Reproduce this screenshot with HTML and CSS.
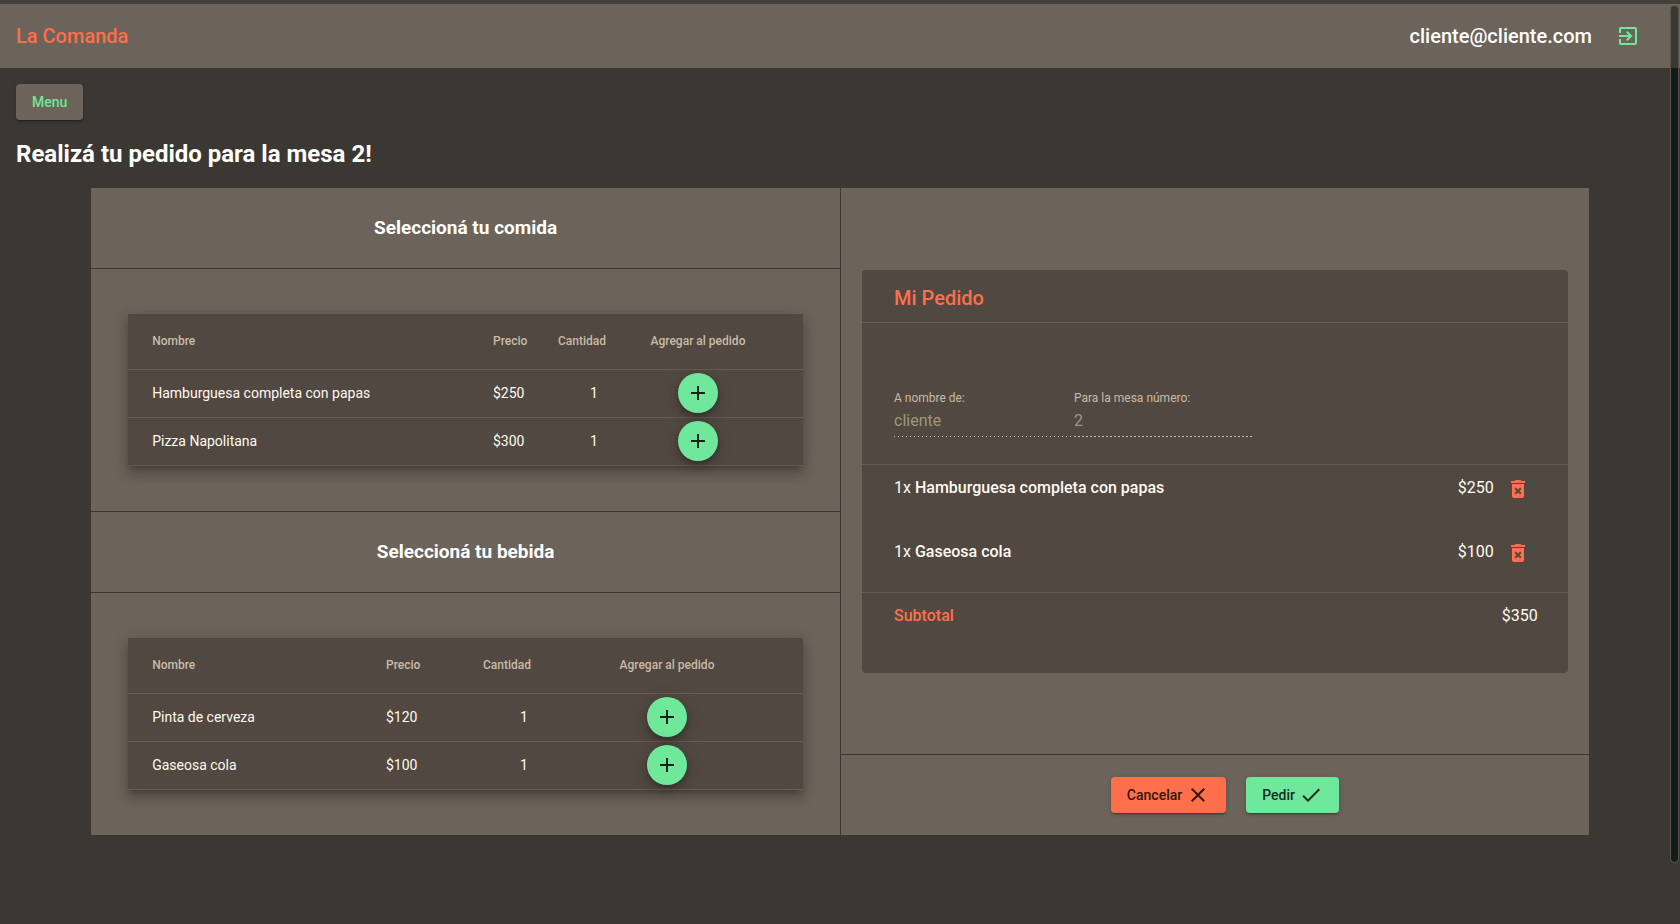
FILE: index.html
```html
<!DOCTYPE html>
<html lang="es">
<head>
<meta charset="utf-8">
<meta name="viewport" content="width=device-width, initial-scale=1">
<title>La Comanda</title>
<link rel="stylesheet" href="styles.css">
</head>
<body>
<svg class="sprite" aria-hidden="true">
  <symbol id="exit" viewBox="0 0 24 24"><path d="M10.09 15.59L11.5 17l5-5-5-5-1.41 1.41L12.67 11H3v2h9.67l-2.58 2.59zM19 3H5c-1.11 0-2 .9-2 2v4h2V5h14v14H5v-4H3v4c0 1.1.89 2 2 2h14c1.1 0 2-.9 2-2V5c0-1.1-.9-2-2-2z"/></symbol>
  <symbol id="add" viewBox="0 0 24 24"><path d="M19 13h-6v6h-2v-6H5v-2h6V5h2v6h6v2z"/></symbol>
  <symbol id="trash" viewBox="0 0 24 24"><path d="M6 19c0 1.1.9 2 2 2h8c1.1 0 2-.9 2-2V7H6v12zm2.46-7.12l1.41-1.41L12 12.59l2.12-2.12 1.41 1.41L13.41 14l2.12 2.12-1.41 1.41L12 15.41l-2.12 2.12-1.41-1.41L10.59 14l-2.13-2.12zM15.5 4l-1-1h-5l-1 1H5v2h14V4z"/></symbol>
  <symbol id="close" viewBox="0 0 24 24"><path d="M19 6.41L17.59 5 12 10.59 6.41 5 5 6.41 10.59 12 5 17.59 6.41 19 12 13.41 17.59 19 19 17.59 13.41 12z"/></symbol>
  <symbol id="done" viewBox="0 0 24 24"><path d="M9 16.2L4.8 12l-1.4 1.4L9 19 21 7l-1.4-1.4L9 16.2z"/></symbol>
</svg>

<header class="topbar">
  <a class="brand" href="#">La Comanda</a>
  <span class="user">cliente@cliente.com</span>
  <button class="icon-button logout" type="button" aria-label="Salir"><svg class="icon"><use href="#exit"/></svg></button>
</header>

<main class="page">
  <button class="button button-menu" type="button">Menu</button>
  <h1 class="page-title">Realizá tu pedido para la mesa 2!</h1>

  <div class="board">
    <div class="column column-products">
      <h2 class="section-title">Seleccioná tu comida</h2>
      <section class="section-body">
        <table class="products products-food">
          <colgroup><col><col class="col-price"><col class="col-amount"><col class="col-add"></colgroup>
          <thead>
            <tr><th scope="col">Nombre</th><th scope="col">Precio</th><th scope="col" class="center">Cantidad</th><th scope="col" class="add">Agregar al pedido</th></tr>
          </thead>
          <tbody>
            <tr><td>Hamburguesa completa con papas</td><td>$250</td><td class="amount-cell"><input class="amount" type="number" min="1" value="1" aria-label="Cantidad de hamburguesa completa con papas"></td><td class="add"><button class="fab" type="button" aria-label="Agregar hamburguesa completa con papas"><svg class="icon"><use href="#add"/></svg></button></td></tr>
            <tr><td>Pizza Napolitana</td><td>$300</td><td class="amount-cell"><input class="amount" type="number" min="1" value="1" aria-label="Cantidad de pizza napolitana"></td><td class="add"><button class="fab" type="button" aria-label="Agregar pizza napolitana"><svg class="icon"><use href="#add"/></svg></button></td></tr>
          </tbody>
        </table>
      </section>
      <h2 class="section-title">Seleccioná tu bebida</h2>
      <section class="section-body">
        <table class="products products-drinks">
          <colgroup><col><col class="col-price"><col class="col-amount"><col class="col-add"></colgroup>
          <thead>
            <tr><th scope="col">Nombre</th><th scope="col">Precio</th><th scope="col" class="center">Cantidad</th><th scope="col" class="add">Agregar al pedido</th></tr>
          </thead>
          <tbody>
            <tr><td>Pinta de cerveza</td><td>$120</td><td class="amount-cell"><input class="amount" type="number" min="1" value="1" aria-label="Cantidad de pinta de cerveza"></td><td class="add"><button class="fab" type="button" aria-label="Agregar pinta de cerveza"><svg class="icon"><use href="#add"/></svg></button></td></tr>
            <tr><td>Gaseosa cola</td><td>$100</td><td class="amount-cell"><input class="amount" type="number" min="1" value="1" aria-label="Cantidad de gaseosa cola"></td><td class="add"><button class="fab" type="button" aria-label="Agregar gaseosa cola"><svg class="icon"><use href="#add"/></svg></button></td></tr>
          </tbody>
        </table>
      </section>
    </div>

    <div class="column column-order">
      <div class="order-area">
        <section class="order">
          <h2 class="order-title">Mi Pedido</h2>
          <form class="order-form">
            <div class="field">
              <label class="field-label" for="customer">A nombre de:</label>
              <input class="field-input" id="customer" type="text" value="cliente" disabled>
            </div>
            <div class="field">
              <label class="field-label" for="table">Para la mesa número:</label>
              <input class="field-input" id="table" type="text" value="2" disabled>
            </div>
          </form>
          <ul class="items">
            <li class="item"><span class="item-name">1x <b>Hamburguesa completa con papas</b></span><span>$250</span><button class="icon-button remove" type="button" aria-label="Quitar hamburguesa completa con papas"><svg class="icon"><use href="#trash"/></svg></button></li>
            <li class="item"><span class="item-name">1x <b>Gaseosa cola</b></span><span>$100</span><button class="icon-button remove" type="button" aria-label="Quitar gaseosa cola"><svg class="icon"><use href="#trash"/></svg></button></li>
          </ul>
          <div class="subtotal"><span class="subtotal-label">Subtotal</span><span>$350</span></div>
        </section>
      </div>
      <div class="actions">
        <button class="button button-cancel" type="button">Cancelar<svg class="icon"><use href="#close"/></svg></button>
        <button class="button button-confirm" type="button">Pedir<svg class="icon"><use href="#done"/></svg></button>
      </div>
    </div>
  </div>
</main>
<div class="scroll-thumb" aria-hidden="true"></div>
</body>
</html>
```
FILE: styles.css
```css
:root {
  --base: #3b3732;
  --panel: #6c635a;
  --card: #504841;
  --rule: #665d52;
  --text: #fffaf0;
  --muted: #c9bba6;
  --green: #70e89b;
  --coral: #ff6f4b;
}

* {
  box-sizing: border-box;
}

body {
  margin: 0;
  min-height: 100vh;
  background: var(--base);
  border-top: 4px solid #453f3a;
  color: var(--text);
  font-family: Roboto, "Noto Sans", sans-serif;
  font-size: 16px;
}

button,
input {
  font: inherit;
}

button {
  border: 0;
  cursor: pointer;
}

.sprite {
  display: none;
}

.icon {
  display: block;
  flex: none;
  width: 24px;
  height: 24px;
  fill: currentColor;
}

.icon-button {
  display: flex;
  align-items: center;
  justify-content: center;
  flex: none;
  width: 40px;
  height: 40px;
  padding: 0;
  background: none;
}

.topbar {
  display: flex;
  align-items: center;
  height: 64px;
  padding: 0 32px 0 16px;
  background: var(--panel);
  font-size: 20px;
  font-weight: 500;
}

.brand {
  margin-right: auto;
  color: var(--coral);
  text-decoration: none;
}

.user {
  margin-right: 16px;
  color: #fff;
}

.logout {
  color: var(--green);
}

.page {
  padding: 16px 8px;
}

.button {
  display: inline-flex;
  align-items: center;
  gap: 4px;
  height: 36px;
  padding: 0 16px;
  border-radius: 4px;
  font-size: 14px;
  font-weight: 500;
  box-shadow: 0 3px 1px -2px rgba(0, 0, 0, .2), 0 2px 2px rgba(0, 0, 0, .14), 0 1px 5px rgba(0, 0, 0, .12);
}

.button-menu {
  margin-left: 8px;
  background: var(--panel);
  color: var(--green);
}

.button-cancel {
  background: var(--coral);
  color: #33160f;
}

.button-confirm {
  background: var(--green);
  color: #162e1f;
}

.page-title {
  margin: 18px 8px;
  color: #fff;
  font-size: 24px;
  font-weight: 700;
  line-height: 32px;
}

.board {
  display: grid;
  grid-template-columns: 1fr 1fr;
  margin: 0 5%;
  background: var(--panel);
}

.column-order {
  display: flex;
  flex-direction: column;
  border-left: 1px solid var(--base);
}

.section-title {
  margin: 0;
  padding: 24px 16px;
  border-bottom: 1px solid var(--base);
  color: #fff;
  font-size: 19px;
  font-weight: 700;
  line-height: 32px;
  text-align: center;
}

.section-body {
  padding: 45px 37px;
}

.section-body:not(:last-child) {
  border-bottom: 1px solid var(--base);
}

.products {
  width: 100%;
  table-layout: fixed;
  border-collapse: separate;
  border-spacing: 0;
  background: var(--card);
  box-shadow: 0 5px 5px -3px rgba(0, 0, 0, .2), 0 8px 10px 1px rgba(0, 0, 0, .14), 0 3px 14px 2px rgba(0, 0, 0, .12);
  font-size: 14px;
}

.products th,
.products td {
  height: 48px;
  padding: 0 0 2px;
  border-bottom: 1px solid var(--rule);
  text-align: left;
}

.products th {
  height: 56px;
  color: var(--muted);
  font-size: 12px;
  font-weight: 500;
  white-space: nowrap;
}

.products th:first-child,
.products td:first-child {
  padding-left: 24px;
}

.products th.center {
  text-align: center;
}

.products .add {
  padding-right: 24px;
  text-align: center;
}

.products-food .col-price {
  width: 54px;
}

.products-food .col-amount {
  width: 70px;
}

.products-food .col-add {
  width: 186px;
}

.products-drinks .col-price {
  width: 73px;
}

.products-drinks .col-amount {
  width: 96px;
}

.products-drinks .col-add {
  width: 248px;
}

.products-food .amount-cell {
  padding-left: 24px;
}

.products-drinks .amount-cell {
  padding-left: 34px;
}

.amount {
  display: block;
  width: 100%;
  padding: 0;
  border: 0;
  background: none;
  color: var(--text);
  text-align: center;
  appearance: textfield;
}

.amount::-webkit-inner-spin-button {
  display: none;
}

.fab {
  display: inline-flex;
  align-items: center;
  justify-content: center;
  vertical-align: middle;
  width: 40px;
  height: 40px;
  padding: 1px 0 0;
  border-radius: 50%;
  background: var(--green);
  color: #13231a;
  box-shadow: 0 3px 5px -1px rgba(0, 0, 0, .2), 0 6px 10px rgba(0, 0, 0, .14), 0 1px 18px rgba(0, 0, 0, .12);
}

.order-area {
  display: flex;
  flex: 1;
  align-items: center;
  padding: 0 21px;
}

.order {
  flex: 1;
  border-radius: 4px;
  background: var(--card);
}

.order-title {
  margin: 0;
  padding: 14px 32px 10px;
  border-bottom: 1px solid var(--rule);
  color: var(--coral);
  font-size: 20px;
  font-weight: 500;
  line-height: 28px;
}

.order-form {
  display: flex;
  padding: 67px 32px 27px;
  border-bottom: 1px solid var(--rule);
}

.field {
  flex: 0 1 180px;
  min-width: 0;
  padding-bottom: 4px;
  background: repeating-linear-gradient(to right, var(--muted) 0 1px, transparent 1px 4px) bottom / 100% 1px no-repeat;
}

.field + .field {
  background: repeating-linear-gradient(to right, var(--muted) 0 2px, transparent 2px 4px) bottom / 100% 1px no-repeat;
}

.field-label {
  display: block;
  color: var(--muted);
  font-size: 12px;
  line-height: 16px;
}

.field-input {
  display: block;
  width: 100%;
  height: 24px;
  margin-top: 3px;
  padding: 0;
  border: 0;
  background: none;
  color: #a0947f;
}

.items {
  margin: 0;
  padding: 0;
  border-bottom: 1px solid var(--rule);
  list-style: none;
}

.item {
  display: flex;
  min-height: 64px;
  padding: 4px 30px 0 32px;
  line-height: 38px;
}

.item:last-child {
  min-height: 63px;
}

.item-name {
  margin-right: auto;
}

.item-name b {
  font-weight: 500;
}

.remove {
  margin-left: 4px;
  color: var(--coral);
}

.subtotal {
  display: flex;
  justify-content: space-between;
  min-height: 80px;
  padding: 4px 30px 0 32px;
  line-height: 38px;
}

.subtotal-label {
  color: var(--coral);
  font-weight: 500;
}

.actions {
  display: flex;
  align-items: center;
  justify-content: center;
  gap: 20px;
  padding: 22px 0 22px 20px;
  border-top: 1px solid var(--base);
}

.scroll-thumb {
  position: fixed;
  top: 5px;
  right: 1px;
  bottom: 61px;
  width: 9px;
  border: 1px solid #5c544c;
  border-radius: 5px;
  background: linear-gradient(#3b3732 62px, #121c18 62px);
}
```
